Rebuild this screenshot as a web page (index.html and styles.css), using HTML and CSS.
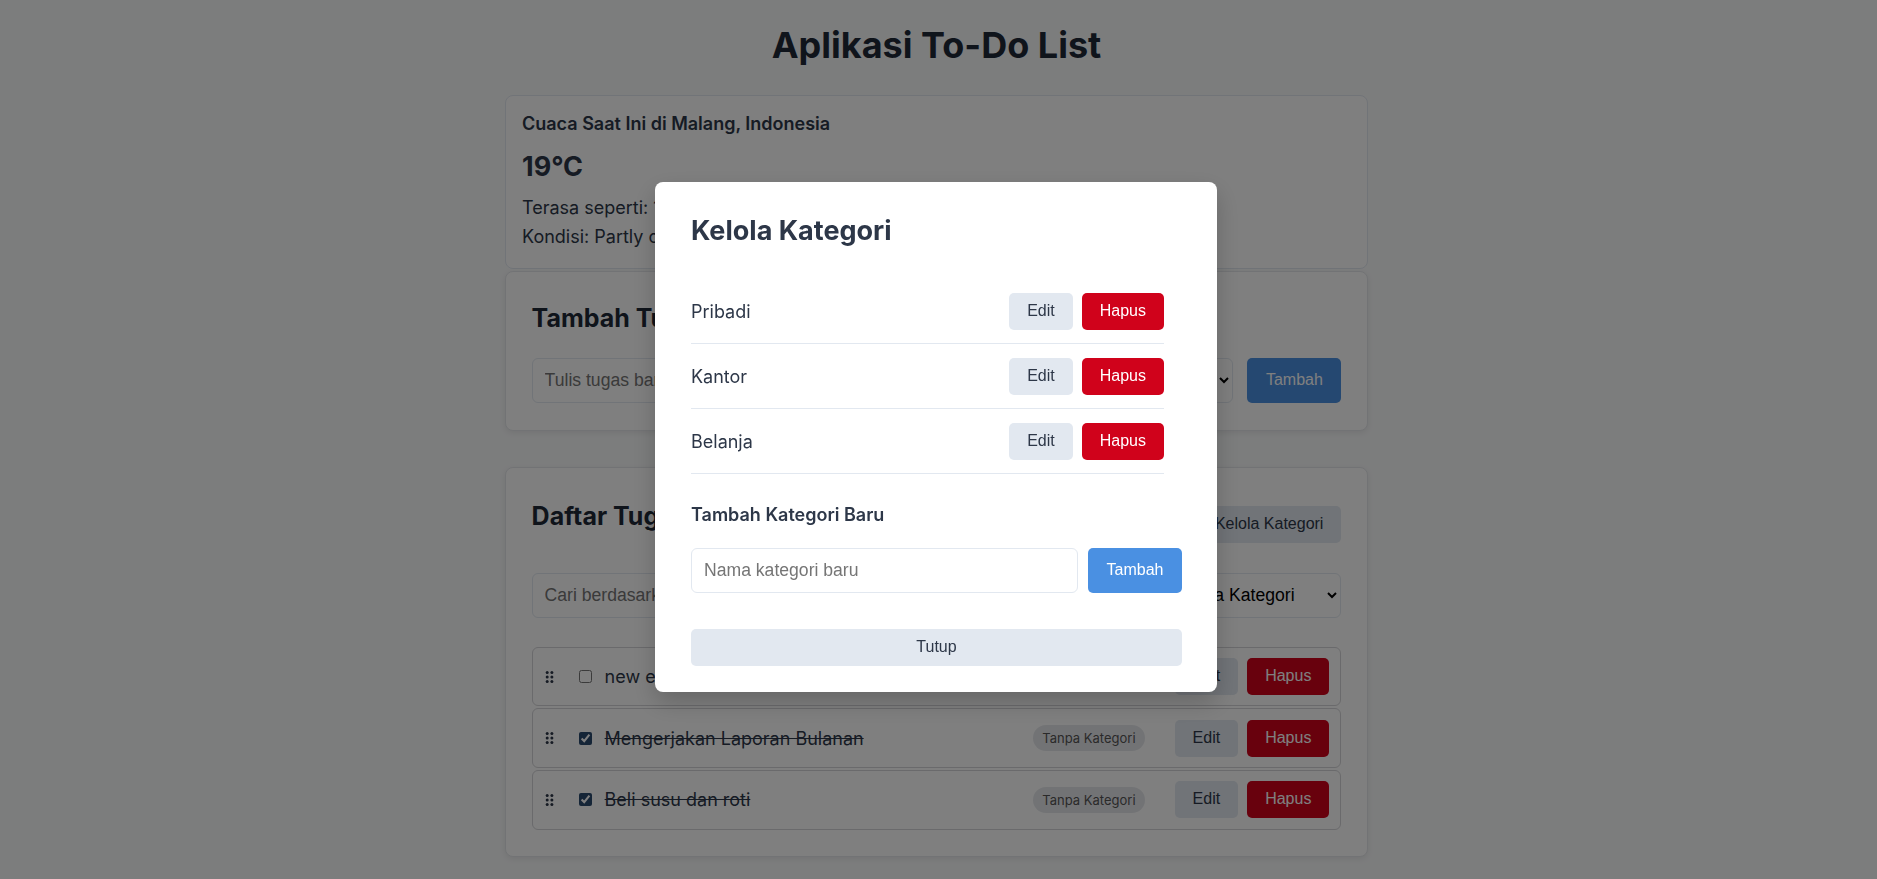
FILE: index.html
```html
<!DOCTYPE html>
<html lang="id">
<head>
<meta charset="utf-8">
<title>Aplikasi To-Do List</title>
<link rel="stylesheet" href="styles.css">
</head>
<body>
<div class="page">
  <h1 class="app-title">Aplikasi To-Do List</h1>

  <section class="weather">
    <h3 class="weather-loc">Cuaca Saat Ini di Malang, Indonesia</h3>
    <div class="weather-temp">19°C</div>
    <p class="weather-line first">Terasa seperti: 19°C</p>
    <p class="weather-line">Kondisi: Partly cloudy</p>
  </section>

  <section class="card add-card">
    <h2 class="card-title">Tambah Tugas Baru</h2>
    <form class="row">
      <input class="field grow" type="text" placeholder="Tulis tugas baru...">
      <select class="field select"><option>Pilih Kategori</option></select>
      <button class="btn btn-primary btn-wide" type="button">Tambah</button>
    </form>
  </section>

  <section class="card list-card">
    <div class="list-head">
      <h2 class="card-title">Daftar Tugas</h2>
      <button class="btn btn-light" type="button">Kelola Kategori</button>
    </div>
    <div class="row filter-row">
      <input class="field grow" type="text" placeholder="Cari berdasarkan nama tugas...">
      <select class="field select"><option>Semua Kategori</option></select>
    </div>
    <ul class="tasks">
      <li class="task">
        <svg class="handle" width="9" height="12" viewBox="0 0 9 12"><circle cx="2.2" cy="1.6" r="1.5"/><circle cx="6.9" cy="1.6" r="1.5"/><circle cx="2.2" cy="6" r="1.5"/><circle cx="6.9" cy="6" r="1.5"/><circle cx="2.2" cy="10.4" r="1.5"/><circle cx="6.9" cy="10.4" r="1.5"/></svg>
        <input class="check" type="checkbox">
        <span class="task-text">new entry</span>
        <span class="badge">Tanpa Kategori</span>
        <div class="actions">
          <button class="btn btn-light" type="button">Edit</button>
          <button class="btn btn-danger" type="button">Hapus</button>
        </div>
      </li>
      <li class="task">
        <svg class="handle" width="9" height="12" viewBox="0 0 9 12"><circle cx="2.2" cy="1.6" r="1.5"/><circle cx="6.9" cy="1.6" r="1.5"/><circle cx="2.2" cy="6" r="1.5"/><circle cx="6.9" cy="6" r="1.5"/><circle cx="2.2" cy="10.4" r="1.5"/><circle cx="6.9" cy="10.4" r="1.5"/></svg>
        <input class="check" type="checkbox" checked>
        <span class="task-text done">Mengerjakan Laporan Bulanan</span>
        <span class="badge">Tanpa Kategori</span>
        <div class="actions">
          <button class="btn btn-light" type="button">Edit</button>
          <button class="btn btn-danger" type="button">Hapus</button>
        </div>
      </li>
      <li class="task">
        <svg class="handle" width="9" height="12" viewBox="0 0 9 12"><circle cx="2.2" cy="1.6" r="1.5"/><circle cx="6.9" cy="1.6" r="1.5"/><circle cx="2.2" cy="6" r="1.5"/><circle cx="6.9" cy="6" r="1.5"/><circle cx="2.2" cy="10.4" r="1.5"/><circle cx="6.9" cy="10.4" r="1.5"/></svg>
        <input class="check" type="checkbox" checked>
        <span class="task-text done">Beli susu dan roti</span>
        <span class="badge">Tanpa Kategori</span>
        <div class="actions">
          <button class="btn btn-light" type="button">Edit</button>
          <button class="btn btn-danger" type="button">Hapus</button>
        </div>
      </li>
    </ul>
  </section>
</div>

<div class="overlay">
  <div class="modal">
    <h2 class="modal-title">Kelola Kategori</h2>
    <ul class="cat-list">
      <li class="cat-item">
        <span class="cat-name">Pribadi</span>
        <div class="actions">
          <button class="btn btn-light" type="button">Edit</button>
          <button class="btn btn-danger" type="button">Hapus</button>
        </div>
      </li>
      <li class="cat-item">
        <span class="cat-name">Kantor</span>
        <div class="actions">
          <button class="btn btn-light" type="button">Edit</button>
          <button class="btn btn-danger" type="button">Hapus</button>
        </div>
      </li>
      <li class="cat-item">
        <span class="cat-name">Belanja</span>
        <div class="actions">
          <button class="btn btn-light" type="button">Edit</button>
          <button class="btn btn-danger" type="button">Hapus</button>
        </div>
      </li>
    </ul>
    <h4 class="modal-sub">Tambah Kategori Baru</h4>
    <div class="new-cat">
      <input class="field grow" type="text" placeholder="Nama kategori baru">
      <button class="btn btn-primary btn-wide" type="button">Tambah</button>
    </div>
    <button class="btn btn-light btn-close" type="button">Tutup</button>
  </div>
</div>
</body>
</html>
```

FILE: styles.css
```css
* {
  box-sizing: border-box;
}

html,
body {
  margin: 0;
}

body {
  min-height: 100vh;
  padding: 0 4px 0 0;
  background: #f9fafb;
  color: #2d3748;
  font-family: Inter, "Noto Sans", sans-serif;
}

.page {
  width: 863px;
  margin: 0 auto;
  padding-top: 24px;
}

.app-title {
  margin: 0 0 28px;
  font-size: 36px;
  line-height: 43.2px;
  font-weight: 700;
  text-align: center;
  color: #1f2937;
}

/* weather */
.weather {
  margin-bottom: 2px;
  padding: 16px;
  background: #fff;
  border: 1px solid #e2e8f0;
  border-radius: 8px;
}

.weather-loc {
  margin: 0;
  font-size: 18px;
  line-height: 24px;
  font-weight: 600;
}

.weather-temp {
  margin-top: 16px;
  font-size: 27px;
  line-height: 30px;
  font-weight: 700;
}

.weather-line {
  margin: 0;
  font-size: 18px;
  line-height: 28.8px;
}

.weather-line.first {
  margin-top: 12px;
}

/* cards */
.card {
  padding: 0 25.6px;
  background: #fff;
  border: 1px solid #e5e7eb;
  border-radius: 8px;
  box-shadow: 0 2px 6px rgba(0, 0, 0, 0.08);
}

.add-card {
  margin-bottom: 36px;
  padding-top: 26px;
  padding-bottom: 27px;
}

.list-card {
  padding-top: 28px;
  padding-bottom: 24.5px;
}

.card-title {
  margin: 0;
  font-size: 25px;
  line-height: 40px;
  font-weight: 700;
  color: #1f2937;
}

.add-card .card-title {
  margin-bottom: 20px;
}

.row {
  display: flex;
  gap: 14px;
}

.field {
  height: 45px;
  padding: 0 12px;
  font-family: "Liberation Sans", Arial, sans-serif;
  font-size: 17.6px;
  color: #000;
  background: #fff;
  border: 1px solid #e2e8f0;
  border-radius: 6px;
}

.grow {
  flex: 1;
  min-width: 0;
}

.select {
  width: 190px;
}

.btn {
  padding: 8px 18px;
  font-family: "Liberation Sans", Arial, sans-serif;
  font-size: 16px;
  line-height: 20.8px;
  border: 0;
  border-radius: 5px;
  cursor: pointer;
  white-space: nowrap;
}

.btn-primary {
  background: #4a90e2;
  color: #fff;
}

.btn-light {
  background: #e2e8f0;
  color: #2d3748;
}

.btn-danger {
  background: #d0021b;
  color: #fff;
}

.btn-wide {
  width: 94px;
  padding: 0;
}

.list-head {
  display: flex;
  justify-content: space-between;
  align-items: center;
}

.list-head .card-title {
  margin-bottom: 17px;
}

.filter-row {
  margin-top: 20px;
}

/* tasks */
.tasks {
  margin: 29px 0 0;
  padding: 0;
  list-style: none;
}

.task {
  display: flex;
  align-items: center;
  margin-bottom: 2px;
  padding: 10.4px 11px 10.4px 12px;
  background: #fff;
  border: 1px solid #d4d4d8;
  border-radius: 6px;
}

.handle {
  flex: none;
  fill: #2d3748;
}

.check {
  flex: none;
  width: 13px;
  height: 13px;
  margin: 0 13px 0 25px;
  accent-color: #2b4a6f;
}

.task-text {
  flex: 1;
  font-size: 18px;
  color: #2d3748;
  white-space: nowrap;
}

.task-text.done {
  text-decoration: line-through;
}

.badge {
  padding: 4px 9px;
  font-size: 13px;
  line-height: 18px;
  color: #555;
  background: #e5e7eb;
  border-radius: 13px;
}

.actions {
  display: flex;
  gap: 9px;
}

.task .actions {
  margin-left: 30px;
}

/* modal */
.overlay {
  position: fixed;
  inset: 0;
  display: flex;
  align-items: center;
  justify-content: center;
  padding: 0 5px 5px 0;
  background: rgba(0, 0, 0, 0.5);
}

.modal {
  width: 562px;
  padding: 32px 35px 26px 36px;
  background: #fff;
  border-radius: 8px;
  box-shadow: 0 10px 25px rgba(0, 0, 0, 0.2);
}

.modal-title {
  margin: 0 0 31.4px;
  font-size: 27px;
  line-height: 33.6px;
  font-weight: 700;
  color: #2d3748;
}

.cat-list {
  margin: 0 18px 0 0;
  padding: 0;
  list-style: none;
}

.cat-item {
  display: flex;
  align-items: center;
  justify-content: space-between;
  padding: 13.6px 0;
  border-bottom: 1px solid #e2e8f0;
}

.cat-name {
  font-size: 18px;
  color: #2d3748;
}

.modal-sub {
  margin: 29.7px 0 22.7px;
  font-size: 18px;
  line-height: 21.6px;
  font-weight: 600;
  color: #2d3748;
}

.new-cat {
  display: flex;
  gap: 9.6px;
}

.new-cat .field {
  height: 44.4px;
}

.btn-close {
  display: block;
  width: 100%;
  height: 37px;
  margin-top: 36.3px;
  padding: 0;
}
```
